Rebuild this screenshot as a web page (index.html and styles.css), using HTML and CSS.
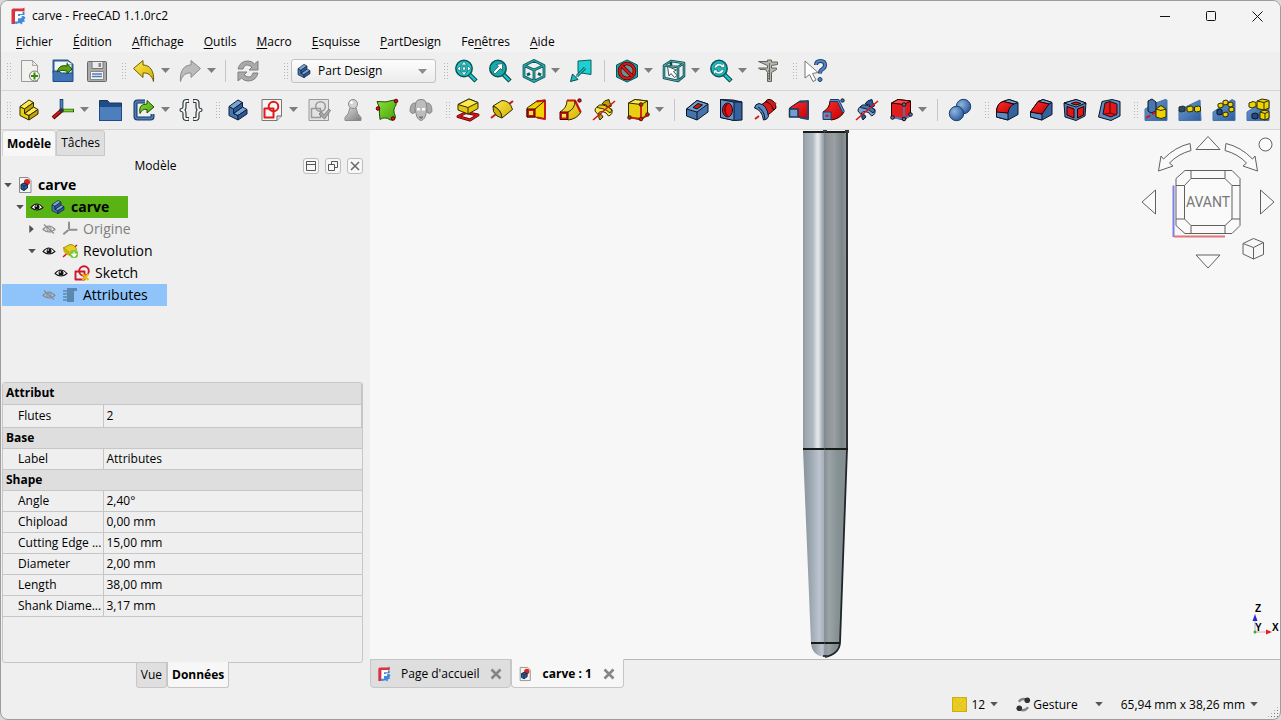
FILE: index.html
```html
<!DOCTYPE html>
<html lang="fr">
<head>
<meta charset="utf-8">
<title>carve - FreeCAD 1.1.0rc2</title>
<link rel="stylesheet" href="styles.css">
</head>
<body>
<svg class="defs" aria-hidden="true">
  <defs>
    <linearGradient id="gy" x1="0" y1="0" x2="1" y2="1"><stop offset="0" stop-color="#fce94f"/><stop offset="1" stop-color="#d4b000"/></linearGradient>
    <linearGradient id="gb" x1="0" y1="0" x2="1" y2="1"><stop offset="0" stop-color="#729fcf"/><stop offset="1" stop-color="#2c5c9f"/></linearGradient>
    <linearGradient id="gg" x1="0" y1="0" x2="1" y2="1"><stop offset="0" stop-color="#8ae234"/><stop offset="1" stop-color="#4ba010"/></linearGradient>
    <linearGradient id="gr" x1="0" y1="0" x2="1" y2="1"><stop offset="0" stop-color="#ff3030"/><stop offset="1" stop-color="#c00000"/></linearGradient>
    <linearGradient id="gk" x1="0" y1="0" x2="1" y2="1"><stop offset="0" stop-color="#d8d8d8"/><stop offset="1" stop-color="#7c7c7c"/></linearGradient>
    <radialGradient id="gs" cx=".35" cy=".35" r=".7"><stop offset="0" stop-color="#8fb6e0"/><stop offset="1" stop-color="#2c5a9c"/></radialGradient>
  </defs>
  <symbol id="logo" viewBox="0 0 16 18"><path d="M3 1.500h9.500l2-1v4H6v4L5 17H1.500V3.500Q1.500 2 3 1.500z" fill="#d9333f"/><path d="M6.500 5h8v3H10v1.500l4-.5 1.500 2-1.500 1.500 1 2-2.500.5-.5 2.500-2.500-1.500L6 17l-1.500-1z" fill="#4189dc"/><path d="M5 4.500h7.500v2.500H8v2h3.500v2.200H8v3.300H5z" fill="#fff"/></symbol>
  <symbol id="new" viewBox="0 0 24 24"><path d="M4.500 1.500h11l5 5v16h-16z" fill="#f2f2ef" stroke="#999"/><path d="M15.500 1.500q1 3.500 0 5 3-.5 5 0z" fill="#fff" stroke="#999"/><circle cx="17.500" cy="17" r="5" fill="#f4f4f0" stroke="#777"/><path d="M17.500 13.500v7M14 17h7" stroke="#358a08" stroke-width="2"/></symbol>
  <symbol id="open" viewBox="0 0 24 24"><path d="M2.500 14V1.500h14l5 4V14" fill="#f5f5f5" stroke="#2b5c9c" stroke-width="2"/><path d="M16 2l1 4 4-1" fill="#fff" stroke="#aaa"/><path d="M2 12h6l2 2h12v8.500H2z" fill="#3e74b5" stroke="#204a87"/><path d="M6 13Q8 5 16 7V4.500l5 5.500-5 5v-3q-5-2-10 1z" fill="#55a80e" stroke="#214d08"/></symbol>
  <symbol id="save" viewBox="0 0 24 24"><rect x="2.500" y="2.500" width="19" height="20" rx="1" fill="#aaa" stroke="#686868"/><path d="M7 2.500h11v7H7z" fill="#ececec" stroke="#777"/><path d="M13.500 4h2.500v4h-2.500z" fill="#888"/><path d="M5.500 12.500h13v8h-13z" fill="#f5f5f5" stroke="#888"/><path d="M7 15h10M7 17.500h10" stroke="#4d7cb6" stroke-width="1.500"/></symbol>
  <symbol id="undo" viewBox="0 0 24 24"><path d="M1.500 9.500L11 1.500V6c7 0 11.500 6 10.500 16.500C20 16.500 16 13.500 11 14v4.500z" fill="url(#gy)" stroke="#6b5900"/></symbol>
  <symbol id="redo" viewBox="0 0 24 24"><path d="M22.500 9.500L13 1.500V6C6 6 1.500 12 2.500 22.500 4 16.500 8 13.500 13 14v4.500z" fill="#bbb" stroke="#8b8b8b"/></symbol>
  <symbol id="refresh" viewBox="0 0 24 24"><path d="M2 10Q4 2 12 2q4 0 6.500 3L22 2v9h-9l3-3Q9 3 7 10z" fill="#aaa" stroke="#808080"/><path d="M22 14q-2 8-10 8-4 0-6.500-3L2 22v-9h9l-3 3q7 5 9-2z" fill="#aaa" stroke="#808080"/></symbol>
  <symbol id="zoomfit" viewBox="0 0 24 24"><path d="M15 15l7 7" stroke="#033" stroke-width="4.500"/><path d="M15 15l6.500 6.500" stroke="#18c5c8" stroke-width="2.500"/><circle cx="10" cy="9.500" r="8.200" fill="#1cc4c6" stroke="#075557" stroke-width="1.500"/><path d="M10 2.500l2.800 3.500H7.200zM10 16.500l2.800-3.500H7.200zM3 9.500L6.500 6.800v5.500zM17 9.500l-3.500-2.700v5.500zM8.500 8h3v3h-3z" fill="#f2ffff" stroke="#175457" stroke-width=".6"/></symbol>
  <symbol id="zoomsel" viewBox="0 0 24 24"><path d="M15 15l7 7" stroke="#033" stroke-width="4.500"/><path d="M15 15l6.500 6.500" stroke="#18c5c8" stroke-width="2.500"/><circle cx="10" cy="9.500" r="8.200" fill="#1ba9ac" stroke="#075557" stroke-width="1.500"/><path d="M14.500 4.500v7l-2-2L7 15l-2-2 5.500-5.500-2-2z" fill="#fff" stroke="#075557" stroke-width=".7"/></symbol>
  <symbol id="iso" viewBox="0 0 24 24"><path d="M12 1.500l10 5v11l-10 5-10-5v-11zM2 6.500l10 4.500 10-4.500M12 11v11.500M5 16l3-1.500M19 16l-3-1.500" fill="none" stroke="#06585a" stroke-width="2.800"/><path d="M12 1.500l10 5v11l-10 5-10-5v-11zM2 6.500l10 4.500 10-4.500M12 11v11.500" fill="none" stroke="#34a9ab" stroke-width="1.200"/></symbol>
  <symbol id="sellink" viewBox="0 0 24 24"><path d="M9 2l13-1v14.500L9 13.500z" fill="#1fcfd2" stroke="#086264"/><path d="M16 9l-8 8" stroke="#064b4d" stroke-width="3"/><path d="M16 9l-9 9" stroke="#25c7ca" stroke-width="1.300"/><path d="M1.500 22.500L3.500 15l5.500 5.500z" fill="#1fbdc0" stroke="#064b4d"/></symbol>
  <symbol id="noentry" viewBox="0 0 24 24"><path d="M12 1l10.500 5v12L12 23 1.500 18V6z" fill="#15a6a8" stroke="#075557"/><circle cx="12" cy="12" r="7.500" fill="#6c8f90" stroke="#500" stroke-width="3.600"/><circle cx="12" cy="12" r="7.500" stroke="#d81818" stroke-width="2.200"/><path d="M7 7l10 10" stroke="#500" stroke-width="3.600"/><path d="M7 7l10 10" stroke="#d81818" stroke-width="2.200"/></symbol>
  <symbol id="boxsel" viewBox="0 0 24 24"><path d="M2 6.500L9 2l13 2v13l-6 5-14-3zM2 6.500L16 8v14M16 8l6-4M9 2v5" stroke="#084e50" stroke-width="2.600"/><path d="M2 6.500L9 2l13 2v13l-6 5-14-3zM2 6.500L16 8v14M16 8l6-4" stroke="#58aaac"/><path d="M5.500 7.500l9 3.500-3 1.500 3.500 4-2.500 2-3.500-4-2 2.500z" fill="#fff" stroke="#365a5c"/></symbol>
  <symbol id="zoomref" viewBox="0 0 24 24"><path d="M15 15l7 7" stroke="#033" stroke-width="4.500"/><path d="M15 15l6.500 6.500" stroke="#18c5c8" stroke-width="2.500"/><circle cx="10" cy="9.500" r="8.200" fill="#1cb9bc" stroke="#075557" stroke-width="1.500"/><path d="M5 9q1-4.500 5-4.500 2 0 3.500 1.200L15.500 4v4.500H11l1.200-1.300Q9 6 7 9zM15 10.500q-1 4.500-5 4.500-2 0-3.500-1.200L4.500 15.500V11H9l-1.200 1.300Q11 13.500 13 10.500z" fill="#efffff" stroke="#176064" stroke-width=".6"/></symbol>
  <symbol id="caliper" viewBox="0 0 24 24"><path d="M2.500 2.500h9V1h4v2h6v2.500l-6 1V9h5v1.500l-5 3v9h-4v-9l-2-3H4L2.500 9h9V6.500z" fill="#b7b7ae" stroke="#62625d"/><path d="M13.500 4v17M12 12h2M12 14.500h2M12 17h2M12 19.500h2" stroke="#55554f" stroke-width=".8"/></symbol>
  <symbol id="whats" viewBox="0 0 24 24"><path d="M2 2v17l4.500-3.500 3.500 7 3-1.500-3.500-6.500 5.500-1z" fill="#fff" stroke="#777"/><path d="M13 6q0-4 4.500-4T22 6q0 3-3 4.500-2 1-2 4" stroke="#203d66" stroke-width="4"/><path d="M13 6q0-4 4.500-4T22 6q0 3-3 4.500-2 1-2 4" stroke="#5585c5" stroke-width="2"/><circle cx="17" cy="20.500" r="2" fill="#5585c5" stroke="#203d66"/></symbol>
  <symbol id="body" viewBox="0 0 24 24"><g stroke="var(--o)"><path d="M3 8.500l4.500 2.500v4.500L12 17.500V22l-9-4.500z" fill="var(--m)"/><path d="M3 8.500L12 2l4.500 2.500-9 6.500zM7.500 15.500l9-6.500 4.500 2.500-9 6z" fill="var(--l)"/><path d="M7.500 11l9-6.500V9l-9 6.500zM12 17.500l9-6V16l-9 6z" fill="var(--d)"/></g></symbol>
  <symbol id="axes" viewBox="0 0 24 24"><path d="M10.500 12V1" stroke="#183d68" stroke-width="3.600"/><path d="M10.500 12V2" stroke="#4c82c0" stroke-width="2"/><path d="M11 12.500h12" stroke="#2b5b0d" stroke-width="3.600"/><path d="M11 12.500h11" stroke="#7bd81e" stroke-width="2"/><path d="M10 13l-8 7" stroke="#550000" stroke-width="4"/><path d="M9 13.500l-6.500 6" stroke="#df1717" stroke-width="2"/><circle cx="10.500" cy="12.500" r="2.300" fill="#333"/></symbol>
  <symbol id="axgray" viewBox="0 0 24 24"><path d="M10.500 12V1M10.500 13H23M10 13l-8 7" stroke="#8f8f8f" stroke-width="3"/></symbol>
  <symbol id="folder" viewBox="0 0 24 24"><path d="M1.500 22.500v-20h8l2 2.500h12v17.500z" fill="#214c87" stroke="#173660"/><path d="M1.500 8.500h22v14h-22z" fill="#4c7fbb" stroke="#204a87"/></symbol>
  <symbol id="export" viewBox="0 0 24 24"><path d="M13 3.500H5.500q-2 0-2 2v13q0 2 2 2h13q2 0 2-2V16" stroke="#18385f" stroke-width="4"/><path d="M13 3.500H5.500q-2 0-2 2v13q0 2 2 2h13q2 0 2-2V16" stroke="#4c7db8" stroke-width="1.800"/><path d="M8 15.500Q6 6 15 6V2.500L22 9l-7 6v-3.500q-5-1-7 4z" fill="url(#gg)" stroke="#214d08"/></symbol>
  <symbol id="braces" viewBox="0 0 24 24"><path d="M10 3H7.500Q5.500 3 5.500 5v3.500Q5.500 12 2.500 12q3 0 3 3.500V19q0 2 2 2H10M14 3h2.500q2 0 2 2v3.500q0 3.500 3 3.500-3 0-3 3.500V19q0 2-2 2H14" stroke="#333b3e" stroke-width="4.200"/><path d="M9.500 3h-2Q5.500 3 5.500 5v3.500Q5.500 12 2.500 12q3 0 3 3.500V19q0 2 2 2h2M14.500 3h2q2 0 2 2v3.500q0 3.500 3 3.500-3 0-3 3.500V19q0 2-2 2h-2" stroke="#f5f5f5" stroke-width="1.800"/></symbol>
  <symbol id="sketch" viewBox="0 0 24 24"><path d="M2 1.500h19.500V18L17 22.500H2z" fill="#f5f5f5" stroke="#777"/><path d="M21.500 18H17v4.500" fill="#ddd" stroke="#666"/><path d="M4.500 10.500h9v9h-9z" stroke="#e11b1b" stroke-width="2"/><circle cx="13.500" cy="8.500" r="4.800" stroke="#e11b1b" stroke-width="2"/></symbol>
  <symbol id="valid" viewBox="0 0 24 24"><path d="M2 1.500h19.500v21H2z" fill="#e3e3e3" stroke="#999"/><path d="M4.500 10.500h9v9h-9z" stroke="#999" stroke-width="1.500"/><circle cx="13.500" cy="8.500" r="4.800" stroke="#999" stroke-width="1.500"/><path d="M12 16l2.500-2L17 17l5-6 1.500 1.500L17.500 21z" fill="#aaa" stroke="#808080"/></symbol>
  <symbol id="pawn" viewBox="0 0 24 24"><path d="M9 9.500h6q1 7 5 10v3H4v-3q4-3 5-10z" fill="url(#gk)" stroke="#8a8a8a"/><circle cx="12" cy="6" r="4.500" fill="#d3d3d3" stroke="#8a8a8a"/><circle cx="10.500" cy="4.500" r="1.500" fill="#fff"/></symbol>
  <symbol id="patch" viewBox="0 0 24 24"><path d="M2 3.500q9 1.500 17-1.500 3 1 2 5-4 5-.5 11.500-.5 4-5 3.500-6-4-10.500-.5-1-7-.5-11.500z" fill="url(#gg)" stroke="#214d08"/><g fill="#d91313" stroke="#500"><circle cx="21" cy="3" r="1.800"/><circle cx="3" cy="10.500" r="1.800"/><circle cx="18" cy="20.500" r="1.800"/></g></symbol>
  <symbol id="sheep" viewBox="0 0 24 24"><path d="M7 5Q1 4 1 13.500q2 3.500 5 1zM17 5q6-1 6 8.500-2 3.500-5 1z" fill="#a9a9a9" stroke="#858585"/><path d="M7 4.500q1-3.500 5-3 4-.5 5 3 2 6 0 11-1 6-5 7-4-1-5-7-2-5 0-11z" fill="#bdbdbd" stroke="#858585"/><path d="M8 10h3v2.500H8zM13 10h3v2.500h-3z" fill="#fafafa"/><path d="M10 19h4l-2 1.500z" fill="#777" stroke="#777"/></symbol>
  <symbol id="pad" viewBox="0 0 24 24"><path d="M2 18.500l8-4 12 2.500-8 5z" stroke="#500" stroke-width="3"/><path d="M2 18.500l8-4 12 2.500-8 5z" stroke="#d91515" stroke-width="1.600"/><path d="M2 6.500L13 1l9 3.500v6L12 16 2 12z" fill="#e4c70a" stroke="#302b00"/><path d="M2 6.500L13 1l9 3.500-10 5z" fill="#fce94f" stroke="#302b00"/><path d="M12 9.500V16" stroke="#302b00"/></symbol>
  <symbol id="revol" viewBox="0 0 24 24"><path d="M1 20L23 3" stroke="#d31616" stroke-width="2"/><path d="M3 8L12 2.500q8 0 10.500 9L12 20q-1-9-9-12z" fill="url(#gy)" stroke="#302b00"/><path d="M3 8q-1 6 4 10l5 2q-1-9-9-12z" fill="#cfb10a" stroke="#302b00"/></symbol>
  <symbol id="loft" viewBox="0 0 24 24"><path d="M3 10L13 3l8-1v19l-10-2H3z" fill="#edd400" stroke="#302b00"/><path d="M12.500 3.500l8.500-1V21l-8-1.500" stroke="#c81515" stroke-width="1.800"/><path d="M3 11h8v8H3z" fill="#c81515" stroke="#500"/><path d="M5 13h4v4H5z" fill="#fce94f"/><path d="M11 11l9.500-8" stroke="#500"/></symbol>
  <symbol id="pipe" viewBox="0 0 24 24"><path d="M2 14Q9 10 9 2.500h8L23 14q-4 7-13 8z" fill="url(#gy)" stroke="#302b00"/><path d="M9 2.500h8L22.500 14" stroke="#c81515" stroke-width="2.200"/><path d="M2 14h8v7.500H2z" fill="#c81515" stroke="#500"/><path d="M4 16h4v3.500H4z" fill="#fce94f"/><path d="M10 14q7-3 7-11" stroke="#302b00"/><circle cx="21.500" cy="2.500" r="1.700" fill="#d31616" stroke="#500"/></symbol>
  <symbol id="helix" viewBox="0 0 24 24"><g stroke="var(--o)"><path d="M10 6q2-4 7-4.500l.5 2.500 2 4-4 2-1-3z" fill="var(--d)"/><path d="M3 13q0-5 6-5 7 0 11 3.500 1 5-3.500 6.500-2-4-6-4.500-4-.5-4.500 3z" fill="var(--l)"/><path d="M5 9q2-3 6-2 5 1 9 5l-2 3q-4-4-8-4.500Q6 10 5 9z" fill="var(--m)"/><path d="M7 16q3 0 4 3l-3 3q-2-2-1-6z" fill="var(--d)"/></g><path d="M1 22L23 3" stroke="#d31616" stroke-width="1.600"/></symbol>
  <symbol id="prim" viewBox="0 0 24 24"><path d="M2.500 5L9 1.500 21.500 3v14.500L15 22 2.500 19z" fill="var(--m)" stroke="var(--o)"/><path d="M2.500 5L9 1.500 21.500 3 15 6.500z" fill="var(--l)" stroke="var(--o)"/><path d="M15 6.500v15M15 21L4 19.500M15 21l6.500-4" stroke="var(--e)" stroke-width="1.800"/><g fill="var(--e)" stroke="var(--o)"><circle cx="15" cy="6.500" r="1.800"/><circle cx="3.500" cy="19.500" r="1.800"/><circle cx="15" cy="21" r="1.800"/><circle cx="21.500" cy="16.500" r="1.800"/></g></symbol>
  <symbol id="pocket" viewBox="0 0 24 24"><path d="M1.500 11L12 2.500l11 3.500v8L12 22 1.500 18z" fill="#4474ae" stroke="#0b1521"/><path d="M1.500 11L12 2.500 23 6 12 14z" fill="#729fcf" stroke="#0b1521"/><path d="M12 14v8" stroke="#0b1521"/><path d="M8 9.500l5-4 4.500 1.500L12 11z" fill="#c91515" stroke="#0b1521"/></symbol>
  <symbol id="hole" viewBox="0 0 24 24"><path d="M1.500 1.500L14 2l9 2v18l-7.500.5-14-3z" fill="#34629f" stroke="#0b1521"/><path d="M1.500 1.500L15 4v18.500l-13.500-3z" fill="#6492c8" stroke="#0b1521"/><path d="M15 4h8" stroke="#0b1521"/><ellipse cx="8.500" cy="12" rx="5" ry="7" fill="#e01616" stroke="#0b1521"/><path d="M8 5.500q-4.500 6.500.5 13" stroke="#790000" stroke-width="1.600"/></symbol>
  <symbol id="groove" viewBox="0 0 24 24"><path d="M8 7l6-4q7 1 8 8l-7 6z" fill="#d81c1c" stroke="#280000"/><path d="M1.500 10Q2 6 6 5.500q8 1 9.500 13-2 4-5 3.500Q9 12 1.500 10z" fill="#5b8bc2" stroke="#0b1521"/><path d="M12.500 3.500q2-3 5-2Q23 4 23 10q-1 2-3 1.500-1-6-7.500-8z" fill="#c62020" stroke="#280000"/><path d="M5 9q6 3 7 12" stroke="#0b1521"/><path d="M2 21L6 18M19 8l4-3" stroke="#d31616" stroke-width="1.800"/></symbol>
  <symbol id="sloft" viewBox="0 0 24 24"><path d="M2.500 10L13 3l8.500.5V21L11 19z" fill="url(#gr)" stroke="#0b1521"/><path d="M12.500 4l8.500-1v18l-8-1.500" stroke="#24466f" stroke-width="1.800"/><path d="M2.500 11H11v8H2.500z" fill="#729fcf" stroke="#17365e" stroke-width="1.500"/></symbol>
  <symbol id="spipe" viewBox="0 0 24 24"><path d="M2 14Q9 10 9 2.500h8L23 14q-4 7-13 8z" fill="url(#gr)" stroke="#280000"/><path d="M9 2.500h8L22.500 14" stroke="#183b68" stroke-width="3"/><path d="M9 2.500h8L22.500 14" stroke="#5c8dc4" stroke-width="1.200"/><path d="M2 14h8v7.500H2z" fill="#5c8dc4" stroke="#183b68"/><path d="M4.500 16.500h3v2.500h-3z" fill="#e01c1c"/><circle cx="21.500" cy="2.500" r="1.700" fill="#4678b4" stroke="#0b1521"/></symbol>
  <symbol id="bool" viewBox="0 0 24 24"><circle cx="15.500" cy="8.500" r="7.200" fill="url(#gs)" stroke="#183b68"/><circle cx="8.500" cy="15.500" r="7.200" fill="url(#gs)" stroke="#183b68"/></symbol>
  <symbol id="fillet" viewBox="0 0 24 24"><path d="M1.500 12Q3 5 8 3.500l6-2 9 3v12L13 22 1.500 19z" fill="#34629f" stroke="#0b1521"/><path d="M1.500 13v6L13 22v-7z" fill="#5b8bc2" stroke="#0b1521"/><path d="M8 3.500l6-2 9 3L19 6z" fill="#729fcf" stroke="#0b1521"/><path d="M1.500 14Q2 5 8 3.500L19 6q-5 2-6 9z" fill="url(#gr)" stroke="#280000"/></symbol>
  <symbol id="chamfer" viewBox="0 0 24 24"><path d="M1.500 14L9 3.500l5-2 9 3v12L13 22 1.500 19z" fill="#34629f" stroke="#0b1521"/><path d="M1.500 14v5L13 22v-6z" fill="#5b8bc2" stroke="#0b1521"/><path d="M9 3.500l5-2 9 3L20 6z" fill="#729fcf" stroke="#0b1521"/><path d="M1.500 14L9 3.500 20 6l-7 10z" fill="url(#gr)" stroke="#280000"/></symbol>
  <symbol id="draft" viewBox="0 0 24 24"><path d="M1 5l12-3.500L23 5l-1 13-9 4.500L2 19z" fill="#527fb5" stroke="#0b1521"/><path d="M1 5l12-3.500L23 5l-10 4z" fill="#729fcf" stroke="#0b1521"/><path d="M4 8.500l7 2.500v9l-7-3zM14.500 11L21 8.500l-.5 8.500-6 3zM8 5.500l5-1.500 5 1.500-5 1.500z" fill="#df1818" stroke="#280000"/></symbol>
  <symbol id="thick" viewBox="0 0 24 24"><path d="M5 3.500l10-2 8 2V18l-9 4.500L1.500 19z" fill="#5b8bc2" stroke="#0b1521"/><path d="M8 5l5-1.500L20 6v10l-6 3-8-3z" fill="#e01818" stroke="#0b1521"/><path d="M13 4v11l7 2M13 15l-7 1.500" stroke="#700" stroke-width="1.200"/></symbol>
  <symbol id="mirror" viewBox="0 0 24 24"><path d="M1 11L12 5l9-3.500 2 .5v20.500H1z" fill="url(#gb)" stroke="#4473ad"/><path d="M4 3l4-2 4 3v9l-5 2-3-2z" fill="#4777b2" stroke="#0b1521"/><path d="M2 20L20 9" stroke="#d31616" stroke-width="2" stroke-dasharray="5 2"/><path d="M12 11l5-3.500 5 3.500v8q-5 3-10 0z" fill="#edd400" stroke="#302b00"/><path d="M12 11q5 3 10 0" stroke="#302b00"/></symbol>
  <symbol id="linear" viewBox="0 0 24 24"><path d="M1 12L22 2l1 20.500H1z" fill="url(#gb)" stroke="#4473ad"/><g stroke="#302b00"><path d="M1 9l4-1 2 1v4l-4 1-2-1z" fill="#234a7c"/><path d="M9 9l4-1 2 1v4l-4 1-2-1zM16.500 9l4-1 2 1v4l-4 1-2-1z" fill="#edd400"/></g></symbol>
  <symbol id="polar" viewBox="0 0 24 24"><path d="M1 14L20 1.500 23 3v19.500H1z" fill="url(#gb)" stroke="#4473ad"/><g fill="#edd400" stroke="#302b00"><path d="M11 3l3-1 2 1v3l-3 1-2-1zM6 6l3-1 2 1v3L8 10l-2-1zM16 5l3-1 2 1v3l-3 1-2-1zM17 10l3-1 2 1v3l-3 1-2-1zM11 15l3-1 2 1v3l-3 1-2-1z"/></g><path d="M5 12l3-1 2 1v4l-3 1-2-1z" fill="#234a7c" stroke="#0b1521"/></symbol>
  <symbol id="multi" viewBox="0 0 24 24"><path d="M1 14L20 1.500 23 3v19.500H1z" fill="url(#gb)" stroke="#4473ad"/><g fill="#edd400" stroke="#302b00"><path d="M11 3l5-2 7 1.500V10l-5 2-7-1.500zM3 5l4-1.500 3 1v4L6 10 3 9zM14 14l4-2 5 1.500V20l-4 2-5-1.500z"/><path d="M11 3l7 1.500 5-2M18 4.500V12M14 14l5 1.500 4-2M19 15.500V22"/></g><path d="M6 16l3-1 3 1v4l-3 1-3-1z" fill="#234a7c" stroke="#0b1521"/></symbol>
  <symbol id="doc" viewBox="0 0 16 16"><path d="M2.500.5H11L14 3.500v12H2.500z" fill="#f4f4f4" stroke="#8b8b8b"/><circle cx="10" cy="5" r="3" fill="#e02020"/><path d="M4 7.500L7 6l3.500 1.500V11L7 13.500 4 12z" fill="#2d5b99" stroke="#132844"/><path d="M4 7.500L7 9l3.500-1.500M7 9v4.500" stroke="#132844" stroke-width=".8"/></symbol>
  <symbol id="eye" viewBox="0 0 14 10"><path d="M1 5.500Q7-1.500 13 5.500 7 10.500 1 5.500z" fill="#fff" stroke="#111" stroke-width="1.100"/><circle cx="7" cy="5" r="2.500" fill="#111"/><circle cx="6.200" cy="4" r=".8" fill="#fff"/></symbol>
  <symbol id="eyeoff" viewBox="0 0 14 10"><path d="M1 5.500Q7-1.500 13 5.500 7 10.500 1 5.500zM2 .5l10 9" stroke="#8a8a8a" stroke-width="1.200"/><circle cx="7" cy="5" r="2.200" stroke="#8a8a8a"/></symbol>
  <symbol id="minirev" viewBox="0 0 16 16"><path d="M1 14L15 2" stroke="#d31616" stroke-width="1.500"/><path d="M1 5l7-3.500q5 0 6.500 5L8 13Q7 7 1 5z" fill="#e9cf1a" stroke="#8a7a00" stroke-width=".8"/><path d="M1 5q0 4 3.500 6.500L8 13Q7 7 1 5z" fill="#cdb010"/><rect x="8" y="7" width="8" height="8" rx="3" fill="#7cc934"/><path d="M12 8.500v3M9.500 11h5L12 14z" fill="#fff" stroke="#fff" stroke-width=".8"/></symbol>
  <symbol id="minisk" viewBox="0 0 16 16"><path d="M1.500 6.500h9v8h-9z" stroke="#cf1728" stroke-width="1.900"/><circle cx="10" cy="6" r="4.800" stroke="#cf1728" stroke-width="1.900"/><path d="M8.500 9l6 6M14.500 9l-6 6" stroke="#e6be14" stroke-width="2"/></symbol>
  <symbol id="tool" viewBox="0 0 16 16"><path d="M5 1h10v3h-3v11H5z" fill="#5e87ad"/><path d="M1 4h4M1 7h4M1 10h4M1 13h4" stroke="#5e87ad" stroke-width="1.500"/></symbol>
  <symbol id="down" viewBox="0 0 9 6"><path d="M0 0h9L4.500 5z" fill="currentColor"/></symbol>
  <symbol id="right" viewBox="0 0 6 9"><path d="M0 0v9l5-4.500z" fill="currentColor"/></symbol>
  <symbol id="x" viewBox="0 0 12 12"><path d="M1.500 1.500l9 9M10.500 1.500l-9 9" stroke="currentColor" stroke-width="2.600"/></symbol>
</svg>
<div class="window">
  <header class="titlebar">
    <svg class="logo"><use href="#logo"/></svg>
    <h1 class="title">carve - FreeCAD 1.1.0rc2</h1>
    <button class="winbtn" aria-label="Réduire"><svg viewBox="0 0 11 11"><path d="M0 5.500h10" stroke="#111"/></svg></button>
    <button class="winbtn" aria-label="Agrandir"><svg viewBox="0 0 11 11"><rect x=".5" y=".5" width="9" height="9" rx="1" stroke="#111"/></svg></button>
    <button class="winbtn" aria-label="Fermer"><svg viewBox="0 0 11 11"><path d="M.5.5l10 10M10.500.5l-10 10" stroke="#111"/></svg></button>
  </header>
  <nav class="menubar">
    <button><u>F</u>ichier</button><button><u>É</u>dition</button><button><u>A</u>ffichage</button><button><u>O</u>utils</button><button><u>M</u>acro</button><button><u>E</u>squisse</button><button><u>P</u>artDesign</button><button>Fe<u>n</u>êtres</button><button><u>A</u>ide</button>
  </nav>
  <div class="toolrow">
    <div class="group"><i class="grip"></i>
      <button class="tb" aria-label="Nouveau"><svg><use href="#new"/></svg></button>
      <button class="tb" aria-label="Ouvrir"><svg><use href="#open"/></svg></button>
      <button class="tb" aria-label="Enregistrer"><svg><use href="#save"/></svg></button>
    </div>
    <div class="group history"><i class="grip"></i>
      <button class="tb" aria-label="Annuler"><svg><use href="#undo"/></svg></button><button class="drop" aria-label="Historique d'annulation"><svg><use href="#down"/></svg></button>
      <button class="tb" aria-label="Rétablir"><svg><use href="#redo"/></svg></button><button class="drop" aria-label="Historique de rétablissement"><svg><use href="#down"/></svg></button>
      <i class="sep"></i>
      <button class="tb" aria-label="Actualiser"><svg><use href="#refresh"/></svg></button>
    </div>
    <div class="group wide"><i class="grip"></i>
      <div class="workbench"><svg class="wbicon blue"><use href="#body"/></svg><select class="wbselect" aria-label="Atelier"><option>Part Design</option></select><svg class="wbarrow"><use href="#down"/></svg></div>
    </div>
    <div class="group"><i class="grip"></i>
      <button class="tb" aria-label="Tout afficher"><svg><use href="#zoomfit"/></svg></button>
      <button class="tb" aria-label="Afficher la sélection"><svg><use href="#zoomsel"/></svg></button>
      <button class="tb" aria-label="Vue isométrique"><svg><use href="#iso"/></svg></button><button class="drop" aria-label="Autres vues"><svg><use href="#down"/></svg></button>
      <button class="tb" aria-label="Aligner"><svg><use href="#sellink"/></svg></button>
      <i class="sep"></i>
      <button class="tb" aria-label="Style de représentation"><svg><use href="#noentry"/></svg></button><button class="drop" aria-label="Autres styles"><svg><use href="#down"/></svg></button>
      <button class="tb" aria-label="Sélection"><svg><use href="#boxsel"/></svg></button><button class="drop" aria-label="Autres sélections"><svg><use href="#down"/></svg></button>
      <button class="tb" aria-label="Vue"><svg><use href="#zoomref"/></svg></button><button class="drop" aria-label="Autres actions"><svg><use href="#down"/></svg></button>
      <button class="tb" aria-label="Mesurer"><svg><use href="#caliper"/></svg></button>
    </div>
    <div class="group"><i class="grip"></i>
      <button class="tb" aria-label="Qu'est-ce que c'est ?"><svg><use href="#whats"/></svg></button>
    </div>
  </div>
  <div class="toolrow">
    <div class="group"><i class="grip"></i>
      <button class="tb yellow" aria-label="Pièce"><svg><use href="#body"/></svg></button>
      <button class="tb" aria-label="Repère"><svg><use href="#axes"/></svg></button><button class="drop" aria-label="Autres repères"><svg><use href="#down"/></svg></button>
      <button class="tb" aria-label="Groupe"><svg><use href="#folder"/></svg></button>
      <button class="tb" aria-label="Lien"><svg><use href="#export"/></svg></button><button class="drop" aria-label="Autres liens"><svg><use href="#down"/></svg></button>
      <button class="tb" aria-label="Variables"><svg><use href="#braces"/></svg></button>
    </div>
    <div class="group"><i class="grip"></i>
      <button class="tb blue" aria-label="Corps"><svg><use href="#body"/></svg></button>
      <button class="tb" aria-label="Esquisse"><svg><use href="#sketch"/></svg></button><button class="drop" aria-label="Autres esquisses"><svg><use href="#down"/></svg></button>
      <button class="tb" aria-label="Valider l'esquisse"><svg><use href="#valid"/></svg></button>
      <button class="tb" aria-label="Vérifier"><svg><use href="#pawn"/></svg></button>
      <button class="tb" aria-label="Forme liée"><svg><use href="#patch"/></svg></button>
      <button class="tb" aria-label="Clone"><svg><use href="#sheep"/></svg></button>
    </div>
    <div class="group"><i class="grip"></i>
      <button class="tb" aria-label="Protrusion"><svg><use href="#pad"/></svg></button>
      <button class="tb" aria-label="Révolution"><svg><use href="#revol"/></svg></button>
      <button class="tb" aria-label="Lissage"><svg><use href="#loft"/></svg></button>
      <button class="tb" aria-label="Balayage"><svg><use href="#pipe"/></svg></button>
      <button class="tb yellow" aria-label="Hélice"><svg><use href="#helix"/></svg></button>
      <button class="tb yellow" aria-label="Primitive"><svg><use href="#prim"/></svg></button><button class="drop" aria-label="Autres primitives"><svg><use href="#down"/></svg></button>
      <i class="sep"></i>
      <button class="tb" aria-label="Cavité"><svg><use href="#pocket"/></svg></button>
      <button class="tb" aria-label="Perçage"><svg><use href="#hole"/></svg></button>
      <button class="tb" aria-label="Rainure"><svg><use href="#groove"/></svg></button>
      <button class="tb" aria-label="Lissage soustractif"><svg><use href="#sloft"/></svg></button>
      <button class="tb" aria-label="Balayage soustractif"><svg><use href="#spipe"/></svg></button>
      <button class="tb blue" aria-label="Hélice soustractive"><svg><use href="#helix"/></svg></button>
      <button class="tb red" aria-label="Primitive soustractive"><svg><use href="#prim"/></svg></button><button class="drop" aria-label="Autres primitives soustractives"><svg><use href="#down"/></svg></button>
      <i class="sep"></i>
      <button class="tb" aria-label="Opération booléenne"><svg><use href="#bool"/></svg></button>
    </div>
    <div class="group"><i class="grip"></i>
      <button class="tb" aria-label="Congé"><svg><use href="#fillet"/></svg></button>
      <button class="tb" aria-label="Chanfrein"><svg><use href="#chamfer"/></svg></button>
      <button class="tb" aria-label="Dépouille"><svg><use href="#draft"/></svg></button>
      <button class="tb" aria-label="Évidement"><svg><use href="#thick"/></svg></button>
    </div>
    <div class="group"><i class="grip"></i>
      <button class="tb" aria-label="Symétrie"><svg><use href="#mirror"/></svg></button>
      <button class="tb" aria-label="Répétition linéaire"><svg><use href="#linear"/></svg></button>
      <button class="tb" aria-label="Répétition circulaire"><svg><use href="#polar"/></svg></button>
      <button class="tb" aria-label="Transformation multiple"><svg><use href="#multi"/></svg></button>
    </div>
  </div>
  <main class="main">
    <aside class="dock">
      <div class="docktabs"><button class="dtab on">Modèle</button><button class="dtab">Tâches</button></div>
      <div class="dockhead"><h2>Modèle</h2>
        <button class="mini" aria-label="Masquer"><svg viewBox="0 0 12 12"><path d="M1.500 1.500h9v9h-9zM1.500 4.500h9" stroke="#555"/></svg></button>
        <button class="mini" aria-label="Détacher"><svg viewBox="0 0 12 12"><path d="M4.500 4V1.500h6v6H8M1.500 4.500h6v6h-6z" stroke="#555"/></svg></button>
        <button class="mini" aria-label="Fermer"><svg viewBox="0 0 12 12"><path d="M2 2l8 8M10 2l-8 8" stroke="#666" stroke-width="1.500"/></svg></button>
      </div>
      <ul class="tree">
        <li class="lv0"><span class="node"><svg class="tw"><use href="#down"/></svg><svg class="ti"><use href="#doc"/></svg><b>carve</b></span></li>
        <li class="lv1"><svg class="tw"><use href="#down"/></svg><span class="node active"><svg class="ey"><use href="#eye"/></svg><svg class="ti blue"><use href="#body"/></svg><b>carve</b></span></li>
        <li class="lv2"><svg class="tw side"><use href="#right"/></svg><span class="node dim"><svg class="ey"><use href="#eyeoff"/></svg><svg class="ti"><use href="#axgray"/></svg>Origine</span></li>
        <li class="lv2"><svg class="tw"><use href="#down"/></svg><span class="node"><svg class="ey"><use href="#eye"/></svg><svg class="ti"><use href="#minirev"/></svg>Revolution</span></li>
        <li class="lv3"><span class="node"><svg class="ey"><use href="#eye"/></svg><svg class="ti"><use href="#minisk"/></svg>Sketch</span></li>
        <li class="sel"><span class="node"><svg class="ey"><use href="#eyeoff"/></svg><svg class="ti"><use href="#tool"/></svg>Attributes</span></li>
      </ul>
      <section class="props">
        <table class="ptable first">
          <colgroup><col class="pname"><col></colgroup>
          <tr><th colspan="2">Attribut</th></tr>
          <tr class="tall"><td>Flutes</td><td>2</td></tr>
        </table>
        <table class="ptable">
          <colgroup><col class="pname"><col></colgroup>
          <tr><th colspan="2">Base</th></tr>
          <tr><td>Label</td><td>Attributes</td></tr>
          <tr><th colspan="2">Shape</th></tr>
          <tr><td>Angle</td><td>2,40°</td></tr>
          <tr><td>Chipload</td><td>0,00 mm</td></tr>
          <tr><td>Cutting Edge ...</td><td>15,00 mm</td></tr>
          <tr><td>Diameter</td><td>2,00 mm</td></tr>
          <tr><td>Length</td><td>38,00 mm</td></tr>
          <tr><td>Shank Diame...</td><td>3,17 mm</td></tr>
        </table>
      </section>
      <div class="proptabs"><button class="ptab">Vue</button><button class="ptab on">Données</button></div>
    </aside>
    <section class="work">
      <div class="view">
        <svg class="cutter" viewBox="0 0 60 529" fill="none">
          <defs>
            <linearGradient id="steel"><stop offset="0" stop-color="#8d989e"/><stop offset=".06" stop-color="#9ca8b1"/><stop offset=".22" stop-color="#b0b8c1"/><stop offset=".32" stop-color="#e6e9eb"/><stop offset=".36" stop-color="#d9dcdf"/><stop offset=".43" stop-color="#a5adb3"/><stop offset=".5" stop-color="#868d94"/><stop offset=".55" stop-color="#8f9599"/><stop offset=".7" stop-color="#999fa2"/><stop offset=".86" stop-color="#7c8688"/><stop offset="1" stop-color="#92989c"/></linearGradient>
            <linearGradient id="cone"><stop offset="0" stop-color="#87949b"/><stop offset=".18" stop-color="#9da8b1"/><stop offset=".37" stop-color="#bdc5d0"/><stop offset=".47" stop-color="#a8b1bb"/><stop offset=".51" stop-color="#8c959c"/><stop offset=".6" stop-color="#9ba3a7"/><stop offset=".8" stop-color="#849091"/><stop offset="1" stop-color="#858e92"/></linearGradient>
          </defs>
          <path d="M8 2h45v317H8z" fill="url(#steel)"/>
          <path d="M8 319h44l-7 194H16z" fill="url(#cone)"/>
          <path d="M16 513h29q-1 13-15 14-13-1-14-14z" fill="url(#cone)"/>
          <path d="M52 2v317l-7 194q-1 11-15 14" stroke="#20262b" stroke-width="1.800"/>
          <path d="M8 2h45M8 319h45M16 513h29" stroke="#171c18" stroke-width="1.800"/>
          <path d="M29.500 2v525" stroke="#6c7782" stroke-opacity=".4"/>
          <path d="M28 0h4v2h-4zM50 0h4v3h-4zM28 525h4v2h-4z" fill="#343b3e"/>
        </svg>
        <svg class="navcube" viewBox="0 0 140 145" fill="none" stroke="#606060">
          <g fill="#fafafa"><path d="M68 6.500l12 13H56zM68 138l12-13H56zM2 72l13.500-12v24zM134 72l-13.500-12v24z"/>
          <path d="M50 13.500l1 7Q38 24 29.500 33l3.500 3-14.500 5L21 26l2.500 3Q35 17 50 13.500zM86 13.500l-1 7Q98 24 106.500 33l-3.500 3 14.500 5L115 26l-2.500 3Q101 17 86 13.500z"/>
          <circle cx="125.500" cy="14.500" r="6.500"/></g>
          <path d="M33.500 55.500V107" stroke="#8080e4" stroke-width="2"/><path d="M34 106.500h51" stroke="#e37676" stroke-width="2"/>
          <path d="M45 40.500h47l8 8v47l-8 8H45l-9-8v-47z" fill="#fafafa"/>
          <path d="M51 48.500h34l7 7V89l-7 6.500H51L44.500 89V55.500zM51 40.500v8M85 40.500v8M51 95.500v8M85 95.500v8M36 55.500h8.500M92 55.500h8M36 89h8.500M92 89h8"/>
          <text class="face" x="68" y="77" text-anchor="middle">AVANT</text>
          <path d="M103 113.500l10.500-5 10 4v12l-10 4.500-10.500-5zM103 113.500l10.500 4 10-5M113.500 117.500V129"/>
        </svg>
        <svg class="axis" viewBox="0 0 30 36" fill="none">
          <path d="M5 29V17" stroke="#a8a8ed"/><path d="M5 29h13" stroke="#eda8a8"/><path d="M5 11l2.500 7h-5z" fill="#2828d0"/><path d="M22 29l-6-2.500v5z" fill="#d92727"/><circle cx="5" cy="29" r="1.500" fill="#31b431"/>
          <text class="ax" x="5" y="9">Z</text><text class="ax" x="5" y="28">Y</text><text class="ax" x="22" y="28">X</text>
        </svg>
      </div>
      <div class="mditabs">
        <div class="mtab"><svg class="mlogo"><use href="#logo"/></svg><span>Page d'accueil</span><button class="close" aria-label="Fermer l'onglet"><svg><use href="#x"/></svg></button></div>
        <div class="mtab on"><svg class="mlogo"><use href="#doc"/></svg><span>carve : 1</span><button class="close" aria-label="Fermer l'onglet"><svg><use href="#x"/></svg></button></div>
      </div>
    </section>
  </main>
  <footer class="status">
    <button class="sb"><svg class="note" viewBox="0 0 14 14"><path d="M.5.5h13v13H.5z" fill="#ebcd22" stroke="#cbad15"/><path d="M1 1l6 6 6-6M1 13l6-6 6 6" stroke="#dcc01c" stroke-width=".8"/></svg><span>12</span><svg class="sa"><use href="#down"/></svg></button>
    <button class="sb nav"><svg class="note" viewBox="0 0 16 16"><path d="M3 5q3-4 8-2.500M4 13q5 3 9-2" stroke="#858585" stroke-width="2.500"/><circle cx="12" cy="3.500" r="3" fill="#2e3436"/><circle cx="3.500" cy="12" r="3" fill="#2e3436"/></svg><span class="navname">Gesture</span><svg class="sa"><use href="#down"/></svg></button>
    <button class="sb dims"><span>65,94 mm x 38,26 mm</span><svg class="sa"><use href="#down"/></svg></button>
    <i class="sizegrip"></i>
  </footer>
</div>
</body>
</html>
```
FILE: styles.css
```css
* { box-sizing: border-box; }
body {
  margin: 0;
  background: #d8d8d8;
  color: #000;
  font: 12px/16px "Open Sans", "Noto Sans", sans-serif;
}
button {
  margin: 0;
  padding: 0;
  border: 0;
  background: none;
  color: inherit;
  font: inherit;
}
svg { display: block; flex: none; fill: none; stroke-linejoin: round; }
.defs { position: absolute; width: 0; height: 0; }
.blue { --l: #78a3d3; --m: #4275b3; --d: #2c5a98; --o: #0f2036; }
.yellow { --l: #fce94f; --m: #e8cf14; --d: #c4a000; --o: #302b00; --e: #d31616; }
.red { --l: #ff4a4a; --m: #e01c1c; --o: #280000; --e: #4a7ab4; }

.window {
  display: flex;
  flex-direction: column;
  min-height: 100vh;
  border: 1px solid #9d9d9d;
  border-radius: 8px;
  background: #efefef;
  overflow: hidden;
}
.titlebar { display: flex; align-items: center; height: 30px; padding-left: 9px; background: #f3f3f3; }
.logo { width: 16px; height: 18px; }
.title { flex: 1; margin: 0 0 0 6px; font-size: 12px; font-weight: 400; }
.winbtn { display: flex; justify-content: center; width: 46px; }
.winbtn svg { width: 11px; height: 11px; }
.menubar { display: flex; gap: 20px; height: 21px; padding: 3px 15px; background: #f3f3f3; line-height: 16px; }
.menubar u { text-underline-offset: 2px; }

.toolrow { display: flex; align-items: center; height: 39px; padding-left: 5px; border-bottom: 1px solid #d5d5d5; }
.group { display: flex; align-items: center; margin-right: 7px; }
.wide { margin-left: 11px; }
.history .drop { width: 12px; }
.grip {
  width: 6px;
  height: 18px;
  background: radial-gradient(circle, #b5b5b5 1px, transparent 1px) 0 0 / 3px 3px;
}
.tb { display: flex; align-items: center; justify-content: center; width: 34px; height: 34px; }
.tb svg { width: 24px; height: 24px; }
.drop { width: 13px; color: #7e7e7e; }
.drop svg { width: 9px; height: 6px; }
.sep { width: 12px; height: 22px; background: linear-gradient(#c6c6c6, #c6c6c6) center / 1px 100% no-repeat; }
.workbench { position: relative; margin-left: 2px; }
.wbselect {
  appearance: none;
  width: 145px;
  height: 24px;
  padding: 0 20px 0 26px;
  border: 1px solid #c2c2c2;
  border-radius: 3px;
  background: linear-gradient(#fdfdfd, #ececec);
  color: #000;
  font: inherit;
}
.wbicon { position: absolute; left: 5px; top: 4px; width: 16px; height: 16px; }
.wbarrow { position: absolute; right: 9px; top: 10px; width: 9px; height: 6px; color: #8c8c8c; }

.main { display: flex; flex: 1; }
.dock { display: flex; flex-direction: column; width: 29%; max-width: 369px; min-width: 300px; padding: 0 7px 0 1px; }
.docktabs { display: flex; height: 26px; }
.dtab { padding: 0 4px; border: 1px solid #c8c8c8; border-radius: 3px 3px 0 0; background: #dfdfdf; }
.dtab.on { border-color: #d5d5d5; border-bottom: 0; background: #f7f7f7; font-weight: 700; }
.dockhead { display: flex; align-items: center; gap: 6px; height: 19px; }
.dockhead h2 { flex: 1; margin: 0; padding-left: 12px; font-size: 12px; font-weight: 400; text-align: center; }
.mini { display: flex; align-items: center; justify-content: center; width: 16px; height: 16px; border: 1px solid #bdbdbd; border-radius: 3px; background: #f7f7f7; }
.mini svg { width: 12px; height: 12px; }

.tree { flex: 1; min-height: 132px; margin: -1px 0 24px; padding: 0; list-style: none; font-size: 14px; line-height: 22px; }
.tree li, .node { display: flex; align-items: center; height: 22px; }
.tw { width: 8px; height: 5px; margin-right: 8px; color: #505050; }
.side { width: 6px; height: 8px; margin: 0 9px 0 1px; }
.ti { width: 16px; height: 16px; margin-right: 5px; }
.ey { width: 14px; height: 10px; margin-right: 6px; }
.lv0 { padding-left: 2px; }
.lv0 .tw { margin-right: 5px; }
.lv1 { padding-left: 14px; }
.lv1 .tw { margin-right: 2px; }
.active { padding: 0 19px 0 4px; background: #5ab315; }
.lv2 { padding-left: 26px; }
.lv2 .tw { margin-right: 6px; }
.lv2 .side { margin-right: 7px; }
.lv3 { padding-left: 52px; }
.dim { color: #808080; }
.sel .node { padding: 0 19px 0 40px; background: #8fc4fa; }

.props { min-height: 281px; border: 1px solid #c6c6c6; border-radius: 3px; }
.ptable { width: 100%; border-collapse: collapse; table-layout: fixed; }
.ptable.first { border-right: 1px solid #c6c6c6; }
.pname { width: 100px; }
.ptable th { height: 21px; padding: 0 3px; background: #dedede; border-bottom: 1px solid #c6c6c6; text-align: left; }
.ptable td { height: 21px; padding: 0 3px; border-bottom: 1px solid #c6c6c6; white-space: nowrap; }
.ptable td:first-child { padding: 0 0 0 15px; border-right: 1px solid #c6c6c6; }
.ptable .tall td { height: 23px; }
.proptabs { display: flex; justify-content: center; height: 26px; margin-top: -1px; }
.ptab { padding: 0 4px; border: 1px solid #c6c6c6; border-radius: 0 0 3px 3px; background: #dfdfdf; }
.ptab.on { border-top: 0; background: #f7f7f7; font-weight: 700; }

.work { display: flex; flex: 1; flex-direction: column; }
.view { position: relative; flex: 1; background: #f7f7f7; border-bottom: 1px solid #b9b9b9; }
.cutter { position: absolute; left: 50%; top: 0; height: 100%; width: 60px; margin-left: -30px; }
.navcube { position: absolute; right: 0; top: 0; width: 140px; height: 145px; }
.face { fill: #777; stroke: none; font: 14px Roboto, sans-serif; }
.axis { position: absolute; right: 0; bottom: 20px; width: 30px; height: 36px; }
.ax { fill: #000; font: bold 10px "Liberation Sans", sans-serif; }
.mditabs { display: flex; height: 29px; margin-top: -1px; z-index: 1; }
.mtab { display: flex; align-items: center; gap: 10px; padding: 0 8px 0 6px; border: 1px solid #c6c6c6; border-radius: 0 0 4px 4px; background: #dedede; }
.mtab.on { gap: 11px; border-top-color: #f7f7f7; background: #f7f7f7; font-weight: 700; }
.mlogo { width: 14px; height: 16px; }
.close { color: #858585; }
.close svg { width: 12px; height: 12px; }

.status { position: relative; display: flex; align-items: center; justify-content: flex-end; height: 31px; padding: 2px 22px 0 0; }
.sb { display: flex; align-items: center; gap: 5px; }
.sb .note { width: 15px; height: 15px; }
.sa { width: 8px; height: 5px; color: #555; }
.nav { gap: 2px; margin-left: 18px; }
.navname { margin-right: 15px; }
.dims { margin-left: 18px; }
.sizegrip {
  position: absolute;
  right: 1px;
  bottom: 1px;
  width: 12px;
  height: 12px;
  background: radial-gradient(circle, #777 1px, transparent 1px) 0 0 / 3px 3px;
  clip-path: polygon(100% 0, 100% 100%, 0 100%);
}
```
